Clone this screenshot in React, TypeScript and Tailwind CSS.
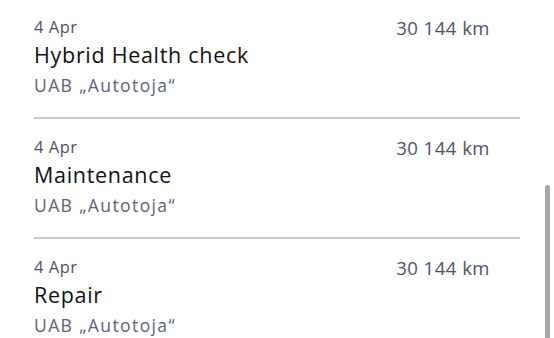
import React from "react";

const items = [
  { date: "4 Apr", title: "Hybrid Health check", shop: "UAB „Autotoja“", km: "30 144 km" },
  { date: "4 Apr", title: "Maintenance", shop: "UAB „Autotoja“", km: "30 144 km" },
  { date: "4 Apr", title: "Repair", shop: "UAB „Autotoja“", km: "30 144 km" },
];

export default function App() {
  return (
    <div
      className="relative w-[554px] h-[338px] overflow-hidden bg-white"
      style={{ fontFamily: "'Open Sans', 'Noto Sans', sans-serif" }}
    >
      <div className="pl-[34px] pr-[34px] -mt-[1px]">
        {items.map((it, i) => (
          <div key={i} className="h-[120px] border-b-2 border-[#c9c9c9] flex justify-between pt-[17px]">
            <div className="flex flex-col">
              <div className="text-[16.5px] leading-[22px] tracking-[0.5px] text-[#4b5366]">{it.date}</div>
              <div className="text-[21.5px] leading-[30px] tracking-[0.7px] text-[#111111] mt-[2px]">{it.title}</div>
              <div className="text-[17.5px] leading-[26px] tracking-[1.4px] text-[#5a6478] mt-[2px]">{it.shop}</div>
            </div>
            <div className="text-[18.5px] leading-[24px] tracking-[0.5px] text-[#4b5366] pr-[30px]">{it.km}</div>
          </div>
        ))}
      </div>
      <div className="absolute left-[545px] top-[185px] w-[5px] h-[160px] rounded-full bg-[#a6a6a6]" />
    </div>
  );
}
